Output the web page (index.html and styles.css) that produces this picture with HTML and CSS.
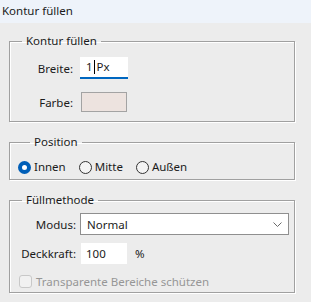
FILE: index.html
```html
<!DOCTYPE html>
<html lang="de">
<head>
    <meta charset="UTF-8">
    <meta name="viewport" content="width=device-width, initial-scale=1.0">
    <title>Kontur füllen</title>
    <link rel="stylesheet" href="styles.css">
</head>
<body>
    <div class="titlebar">Kontur füllen</div>

    <div class="content">
        <fieldset class="group group-stroke">
            <legend>Kontur füllen</legend>
            <div class="form-grid">
                <label class="field-label">Breite:</label>
                <div class="num-field active"><span>1</span><span class="caret"></span><span>Px</span></div>
                <label class="field-label">Farbe:</label>
                <div class="swatch"></div>
            </div>
        </fieldset>

        <fieldset class="group group-position">
            <legend>Position</legend>
            <div class="radio-row">
                <div class="radio-item"><span class="radio checked"></span>Innen</div>
                <div class="radio-item"><span class="radio"></span>Mitte</div>
                <div class="radio-item"><span class="radio"></span>Außen</div>
            </div>
        </fieldset>

        <fieldset class="group group-blend">
            <legend>Füllmethode</legend>
            <div class="form-grid blend-grid">
                <label class="field-label">Modus:</label>
                <div class="select-box">
                    <span>Normal</span>
                    <svg class="chevron" width="9" height="5" viewBox="0 0 9 5">
                        <polyline points="0.5,0.5 4.5,4.5 8.5,0.5" fill="none" stroke="#6a6a6a" stroke-width="1"/>
                    </svg>
                </div>
                <label class="field-label">Deckkraft:</label>
                <div class="opacity-row">
                    <div class="num-field plain">100</div>
                    <span class="unit">%</span>
                </div>
            </div>
            <div class="check-row">
                <span class="checkbox"></span>Transparente Bereiche schützen
            </div>
        </fieldset>
    </div>
</body>
</html>
```

FILE: styles.css
```css
body{
    margin: 0;
    background: #ececec;
    font-family: "Noto Sans", "Open Sans", sans-serif;
    font-size: 11.5px;
    color: #1b1b1b;
}

.titlebar{
    height: 23px;
    line-height: 22px;
    padding-left: 2px;
    background: #eef3fa;
}

.content{
    padding: 10px 16px 0 9px;
}

.group{
    margin: 0 0 12px 0;
    padding: 0;
    border: 1px solid #a0a0a0;
    box-shadow: inset 1px 1px 0 #fff, 1px 1px 0 #fff;
}

.group legend{
    margin-left: 12px;
    padding: 0 4px;
    line-height: 16px;
}

.form-grid{
    display: grid;
    grid-template-columns: 63px 48px;
    column-gap: 7px;
    row-gap: 13px;
    align-items: center;
}

.group-stroke{
    padding: 8px 0 9px 0;
}

.field-label{
    text-align: right;
}

.num-field{
    height: 22px;
    box-sizing: border-box;
    background: #fff;
    padding-left: 6px;
    line-height: 20px;
    display: flex;
    align-items: center;
}

.num-field.active{
    border-bottom: 2px solid #0067c0;
}

.caret{
    display: inline-block;
    width: 1px;
    height: 14px;
    background: #000;
    margin: 0 2px 0 1px;
}

.swatch{
    width: 46px;
    height: 20px;
    box-sizing: border-box;
    margin-left: 1px;
    background: #ede3df;
    border: 1px solid #a3a3a3;
}

.group-position{
    padding: 9px 0 4px 8px;
}

.radio-row{
    display: flex;
    gap: 13px;
    line-height: 16px;
}

.radio-item{
    display: flex;
    align-items: center;
    gap: 3px;
}

.radio{
    width: 13px;
    height: 13px;
    box-sizing: border-box;
    border-radius: 50%;
    border: 1px solid #333;
    background: #f4f4f4;
}

.radio.checked{
    border: 4px solid #005fb8;
    background: #fff;
}

.group-blend{
    padding: 5px 5px 4px 0;
}

.blend-grid{
    grid-template-columns: 66px 1fr;
    column-gap: 4px;
    row-gap: 8px;
}

.select-box{
    height: 22px;
    box-sizing: border-box;
    background: #fff;
    border: 1px solid #8f8f8f;
    padding: 0 6px 0 6px;
    display: flex;
    align-items: center;
    justify-content: space-between;
}

.opacity-row{
    display: flex;
    align-items: center;
    gap: 8px;
}

.num-field.plain{
    width: 46px;
    height: 21px;
    margin-left: 1px;
    padding-left: 5px;
}

.check-row{
    display: flex;
    align-items: center;
    gap: 4px;
    margin-top: 11px;
    padding-left: 9px;
    height: 13px;
    color: #969696;
}

.checkbox{
    width: 13px;
    height: 13px;
    box-sizing: border-box;
    border: 1px solid #c8c8c8;
    border-radius: 3px;
    background: #f1f1f1;
}
```
